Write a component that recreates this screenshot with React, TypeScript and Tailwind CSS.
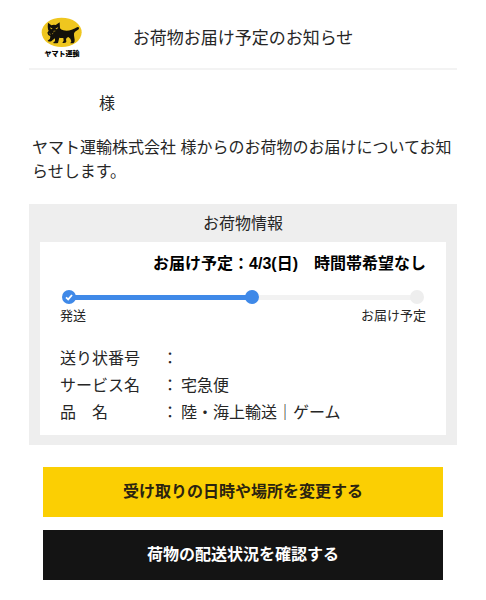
import React from "react";

const details: { label: string; value: string }[] = [
  { label: "送り状番号", value: "" },
  { label: "サービス名", value: "宅急便" },
  { label: "品　名", value: "陸・海上輸送｜ゲーム" },
];

function Logo() {
  return (
    <div className="flex w-[42px] flex-col items-center">
      <svg viewBox="0 0 126 93" className="h-[31px] w-[42px]" aria-hidden="true">
        <ellipse cx="62" cy="46" rx="60" ry="44" fill="#efc61f" />
        <g fill="#14110a">
          <path d="M21 17 L31 25 Q37 22 44 24 L56 16 L57 34 Q60 39 67 40 Q80 43 92 38 Q102 35 108 31 Q112 29 114 32 Q115 36 111 38 L102 44 Q98 48 99 55 L101 68 Q102 77 97 79 L88 79 L91 73 L88 65 L82 60 Q77 62 75 66 L76 74 Q75 79 64 78 L68 71 L67 63 Q60 64 55 62 L53 70 L51 78 Q43 80 36 78 L42 72 L42 64 L36 68 L31 73 Q24 75 20 71 L27 65 L28 58 Q20 55 19 47 L23 41 Q19 36 21 17 Z" />
        </g>
        <path d="M27 31 L35 35 L30 37 Z M52 30 L43 35 L48 37 Z" fill="#efc61f" />
        <path d="M25 50 L29 52 M33 51 L37 48 M37 43 L43 42" stroke="#c9a51c" strokeWidth="2" fill="none" />
      </svg>
      <span className="text-[7px] leading-3 font-black whitespace-nowrap text-black">ヤマト運輸</span>
    </div>
  );
}

function Progress() {
  return (
    <div className="mt-[14px]">
      <div className="flex items-center px-[2px]" role="img" aria-label="配送状況">
        <span className="flex size-[14px] items-center justify-center rounded-full bg-[#3f89e8]">
          <svg viewBox="0 0 14 14" className="size-[14px]" aria-hidden="true">
            <path d="M4 7.4 L6.2 9.4 L10 5" fill="none" stroke="#fff" strokeWidth="1.8" />
          </svg>
        </span>
        <span className="-mx-px h-[5px] flex-[170] bg-[#3f89e8]" />
        <span className="size-[14px] rounded-full bg-[#3f89e8]" />
        <span className="-mr-px h-[5px] flex-[152] bg-[#f2f2f2]" />
        <span className="size-[14px] rounded-full bg-[#eeeeee]" />
      </div>
      <div className="mt-[2px] flex justify-between text-[13px] leading-5">
        <span>発送</span>
        <span>お届け予定</span>
      </div>
    </div>
  );
}

export default function App() {
  return (
    <main
      lang="ja"
      className="min-h-screen bg-white px-[29px] pb-5 font-['Liberation_Sans','Noto_Sans_CJK_JP',sans-serif] text-base text-[#262626]"
    >
      <header className="grid grid-cols-[1fr_auto_1fr] border-b-2 border-[#f3f3f3] px-3 pt-[17px] pb-2">
        <Logo />
        <h1 className="pt-[10px] text-[17px] leading-6">お荷物お届け予定のお知らせ</h1>
      </header>

      <p className="mt-[22px] pl-[70px] leading-6">様</p>
      <p className="mt-5 px-[3px] leading-6">
        ヤマト運輸株式会社 様からのお荷物のお届けについてお知らせします。
      </p>

      <section className="mt-5 bg-[#eeeeee] px-[11px] pb-[10px]">
        <h2 className="pt-2 pb-[6px] text-center leading-6">お荷物情報</h2>
        <div className="bg-white px-5 pt-[10px] pb-[9px]">
          <p className="text-right leading-6 font-bold whitespace-nowrap text-black">
            お届け予定：4/3(日)　時間帯希望なし
          </p>
          <Progress />
          <dl className="mt-[19px] leading-[27px]">
            {details.map((d) => (
              <div key={d.label} className="flex">
                <dt className="w-[102px]">{d.label}</dt>
                <dd className="flex gap-[3px]">
                  <span>：</span>
                  <span>{d.value}</span>
                </dd>
              </div>
            ))}
          </dl>
        </div>
      </section>

      <div className="mt-[22px] flex flex-col gap-[13px] px-[14px]">
        <button type="button" className="h-[50px] bg-[#fbcf03] font-bold text-[#2b2410]">
          受け取りの日時や場所を変更する
        </button>
        <button type="button" className="h-[50px] bg-[#141414] font-bold text-white">
          荷物の配送状況を確認する
        </button>
      </div>
    </main>
  );
}
